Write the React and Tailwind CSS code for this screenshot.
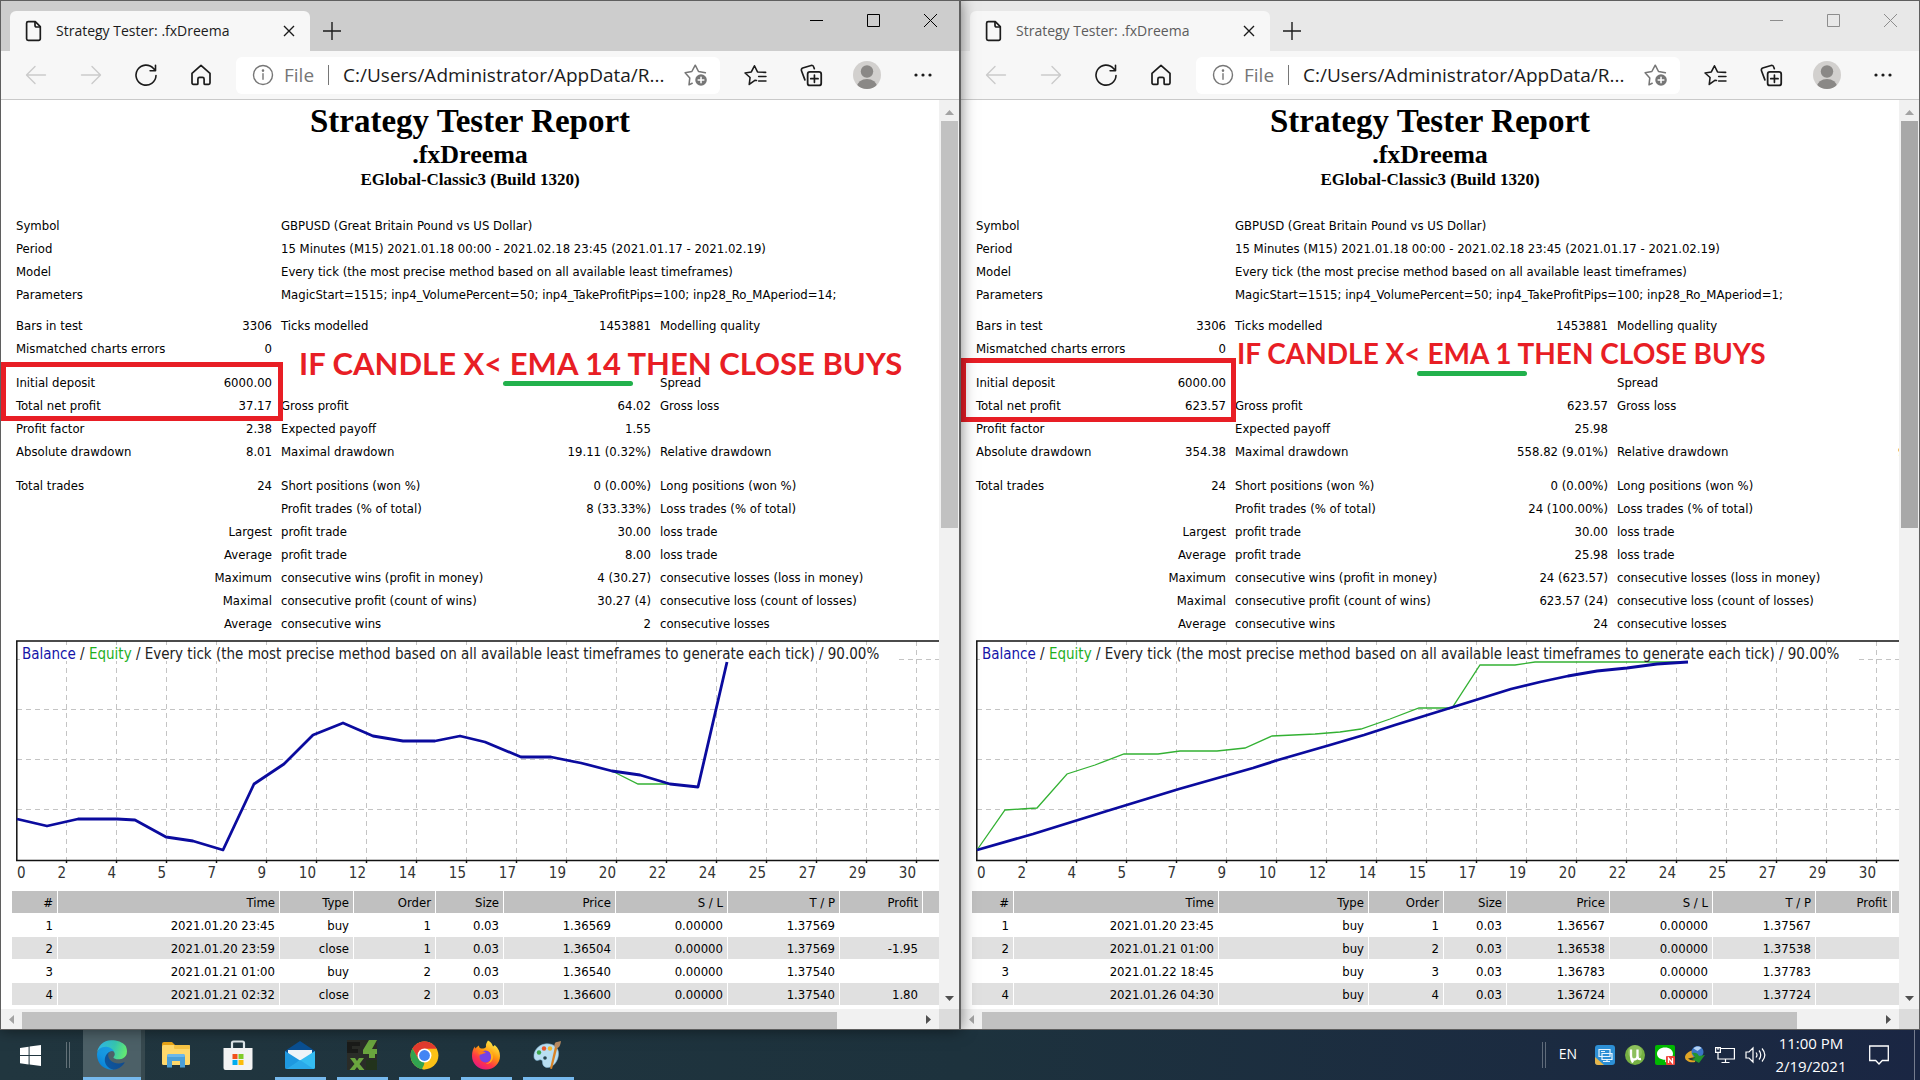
const SANS = "font-['Open_Sans','Noto_Sans',sans-serif]";
const TAHOMA = "font-['DejaVu_Sans_Condensed','DejaVu_Sans',sans-serif]";
const TIMES = "font-['Liberation_Serif',serif]";

const ticks = [0, 2, 4, 5, 7, 9, 10, 12, 14, 15, 17, 19, 20, 22, 24, 25, 27, 29, 30];

const reports = [
  {
    id: "ema14",
    active: true,
    period: "14",
    statCols: ["w-[160px]", "w-[105px]", "w-[220px]", "w-[159px]", "w-[280px]", "w-[95px]"],
    tradeCols: [
      "w-[46px]", "w-[222px]", "w-[74px]", "w-[82px]", "w-[68px]",
      "w-[112px]", "w-[112px]", "w-[112px]", "w-[83px]", "w-[109px]",
    ],
    stats: [
      ["Bars in test", "3306", "Ticks modelled", "1453881", "Modelling quality"],
      ["Mismatched charts errors", "0", "", "", ""],
      null,
      ["Initial deposit", "6000.00", "", "", "Spread"],
      ["Total net profit", "37.17", "Gross profit", "64.02", "Gross loss"],
      ["Profit factor", "2.38", "Expected payoff", "1.55", ""],
      ["Absolute drawdown", "8.01", "Maximal drawdown", "19.11 (0.32%)", "Relative drawdown"],
      null,
      ["Total trades", "24", "Short positions (won %)", "0 (0.00%)", "Long positions (won %)"],
      ["", "", "Profit trades (% of total)", "8 (33.33%)", "Loss trades (% of total)"],
      ["", "Largest", "profit trade", "30.00", "loss trade"],
      ["", "Average", "profit trade", "8.00", "loss trade"],
      ["", "Maximum", "consecutive wins (profit in money)", "4 (30.27)", "consecutive losses (loss in money)"],
      ["", "Maximal", "consecutive profit (count of wins)", "30.27 (4)", "consecutive loss (count of losses)"],
      ["", "Average", "consecutive wins", "2", "consecutive losses"],
    ],
    balance:
      "1,179 31,186 62,179 101,179 119,180 150,197 177,201 207,210 238,144 268,124 297,95 327,83 357,96 387,101 419,101 444,96 469,102 505,117 535,117 565,123 596,131 624,135 654,144 682,147 711,22",
    equity: "596,131 622,144 654,144",
    trades: [
      ["1", "2021.01.20 23:45", "buy", "1", "0.03", "1.36569", "0.00000", "1.37569", "", ""],
      ["2", "2021.01.20 23:59", "close", "1", "0.03", "1.36504", "0.00000", "1.37569", "-1.95", ""],
      ["3", "2021.01.21 01:00", "buy", "2", "0.03", "1.36540", "0.00000", "1.37540", "", ""],
      ["4", "2021.01.21 02:32", "close", "2", "0.03", "1.36600", "0.00000", "1.37540", "1.80", ""],
    ],
  },
  {
    id: "ema1",
    active: false,
    period: "1",
    statCols: ["w-[160px]", "w-[99px]", "w-[220px]", "w-[162px]", "w-[281px]", "w-[97px]"],
    tradeCols: [
      "w-[42px]", "w-[205px]", "w-[150px]", "w-[75px]", "w-[63px]",
      "w-[103px]", "w-[103px]", "w-[103px]", "w-[76px]", "w-[100px]",
    ],
    stats: [
      ["Bars in test", "3306", "Ticks modelled", "1453881", "Modelling quality"],
      ["Mismatched charts errors", "0", "", "", ""],
      null,
      ["Initial deposit", "6000.00", "", "", "Spread"],
      ["Total net profit", "623.57", "Gross profit", "623.57", "Gross loss"],
      ["Profit factor", "", "Expected payoff", "25.98", ""],
      ["Absolute drawdown", "354.38", "Maximal drawdown", "558.82 (9.01%)", "Relative drawdown", "9.01%"],
      null,
      ["Total trades", "24", "Short positions (won %)", "0 (0.00%)", "Long positions (won %)"],
      ["", "", "Profit trades (% of total)", "24 (100.00%)", "Loss trades (% of total)"],
      ["", "Largest", "profit trade", "30.00", "loss trade"],
      ["", "Average", "profit trade", "25.98", "loss trade"],
      ["", "Maximum", "consecutive wins (profit in money)", "24 (623.57)", "consecutive losses (loss in money)"],
      ["", "Maximal", "consecutive profit (count of wins)", "623.57 (24)", "consecutive loss (count of losses)"],
      ["", "Average", "consecutive wins", "24", "consecutive losses"],
    ],
    balance:
      "1,210 57,194 131,171 203,149 277,128 302,120 354,105 388,95 419,85 474,68 535,49 564,42 592,36 621,31 651,28 681,24 712,22",
    equity:
      "1,210 29,170 45,169 61,168 91,134 119,125 148,114 182,114 204,111 241,111 269,108 296,96 339,94 364,92 385,89 414,79 443,68 476,68 504,25 539,25 559,22 712,22",
    trades: [
      ["1", "2021.01.20 23:45", "buy", "1", "0.03", "1.36567", "0.00000", "1.37567", "", ""],
      ["2", "2021.01.21 01:00", "buy", "2", "0.03", "1.36538", "0.00000", "1.37538", "", ""],
      ["3", "2021.01.22 18:45", "buy", "3", "0.03", "1.36783", "0.00000", "1.37783", "", ""],
      ["4", "2021.01.26 04:30", "buy", "4", "0.03", "1.36724", "0.00000", "1.37724", "", ""],
    ],
  },
];

const tradeHead = ["#", "Time", "Type", "Order", "Size", "Price", "S / L", "T / P", "Profit", "Balance"];

/* ---------- browser icons ---------- */

function Icon({ children, size = 22, className = "" }) {
  return (
    <svg
      width={size}
      height={size}
      viewBox="0 0 22 22"
      fill="none"
      stroke="currentColor"
      strokeWidth="1.4"
      strokeLinecap="round"
      strokeLinejoin="round"
      className={className}
    >
      {children}
    </svg>
  );
}

const PageIcon = () => (
  <Icon className="text-[#1c1c1c]">
    <path d="M5.2 1.7h7.1l5 5v12.1a1.6 1.6 0 0 1-1.6 1.6H5.2a1.6 1.6 0 0 1-1.6-1.6V3.3a1.6 1.6 0 0 1 1.6-1.6z" strokeWidth="1.7" />
    <path d="M12 1.9v3.6a1.5 1.5 0 0 0 1.5 1.5H17" strokeWidth="1.7" />
  </Icon>
);
const BackIcon = () => (
  <Icon>
    <path d="M20.5 11H2M10 2.5 1.5 11l8.5 8.5" />
  </Icon>
);
const ForwardIcon = () => (
  <Icon>
    <path d="M1.5 11H20M12 2.5l8.5 8.5-8.5 8.5" />
  </Icon>
);
const ReloadIcon = () => (
  <Icon>
    <path d="M21 11.5A10 10 0 1 1 18.5 4.5L20.3 6.5M20.5 1.3v5.4h-5.4" strokeWidth="1.6" />
  </Icon>
);
const HomeIcon = () => (
  <Icon>
    <path
      d="M2 9.3 11 1.3l9 8v9.8a1.3 1.3 0 0 1-1.3 1.3h-3.6a1 1 0 0 1-1-1v-4.5a1.6 1.6 0 0 0-1.6-1.6H9.5a1.6 1.6 0 0 0-1.6 1.6v4.5a1 1 0 0 1-1 1H3.3A1.3 1.3 0 0 1 2 19.1z"
      strokeWidth="1.7"
    />
  </Icon>
);
const InfoIcon = () => (
  <Icon className="shrink-0 text-[#767676]">
    <circle cx="11" cy="11" r="9.5" />
    <path d="M11 9.7v5.5" />
    <circle cx="11" cy="6.6" r=".6" fill="currentColor" />
  </Icon>
);
const AddFavouriteIcon = () => (
  <Icon size={24} className="text-[#767676]">
    <path d="M7.5 18.6 4.6 20l.7-6.3L1 9l6.2-1.2L10.3 2l3 5.8 6.3 1.2" />
    <circle cx="15.6" cy="15.6" r="5.3" fill="currentColor" stroke="none" />
    <path d="M15.6 13v5.2M13 15.6h5.2" stroke="#fff" />
  </Icon>
);
const FavouritesIcon = () => (
  <Icon size={23}>
    <path d="m12 15.8-1.6-.2-5.4 4 .8-6.7L1 8.6l6-1L10 1.7l2.9 5.9 7.8.4M14 12h7M14 16.3h7" strokeWidth="1.5" />
  </Icon>
);
const CollectionsIcon = () => (
  <Icon size={23}>
    <rect x="7.3" y="7.5" width="13" height="13" rx="2.2" strokeWidth="1.7" />
    <path d="M13.8 10.5v7M10.3 14h7" strokeWidth="1.6" />
    <path d="M4.7 15.2 1.4 6.4a2 2 0 0 1 1.2-2.6l8-2.4a2 2 0 0 1 2.5 1.4l.6 1.7" strokeWidth="1.6" />
  </Icon>
);
const AvatarIcon = ({ id }) => (
  <svg width="28" height="28" viewBox="0 0 28 28">
    <clipPath id={`${id}-avatar`}>
      <circle cx="14" cy="14" r="14" />
    </clipPath>
    <g clipPath={`url(#${id}-avatar)`}>
      <rect width="28" height="28" fill="#d2d0ce" />
      <circle cx="14" cy="10.5" r="6.2" fill="#8a8886" />
      <ellipse cx="14" cy="26" rx="10" ry="8" fill="#8a8886" />
    </g>
  </svg>
);
const MoreIcon = () => (
  <svg width="18" height="4" viewBox="0 0 18 4" fill="currentColor">
    <circle cx="2" cy="2" r="1.6" />
    <circle cx="9" cy="2" r="1.6" />
    <circle cx="16" cy="2" r="1.6" />
  </svg>
);

/* ---------- browser window ---------- */

function TitleBar({ active }) {
  const button = "flex h-[38px] w-[57px] items-center justify-center";
  return (
    <div className={`flex h-[50px] shrink-0 justify-between ${active ? "bg-[#cdcdcd]" : "bg-[#e8e8e8]"}`}>
      <div className="flex items-end pl-[9px]">
        <div
          className={`flex h-10 w-[300px] items-center rounded-t-md bg-[#f7f7f7] pr-[11px] pb-px pl-[13px] ${
            active ? "text-[#1b1b1b]" : "text-[#5c5c5c]"
          }`}
        >
          <PageIcon />
          <span className={`ml-[11px] flex-1 pb-px text-[14px] whitespace-nowrap ${SANS}`}>
            Strategy Tester: .fxDreema
          </span>
          <button aria-label="Close tab" className="flex size-5 items-center justify-center">
            <svg width="12" height="12" viewBox="0 0 12 12" stroke="#1b1b1b" strokeWidth="1.4">
              <path d="m1 1 10 10M11 1 1 11" />
            </svg>
          </button>
        </div>
        <button aria-label="New tab" className="flex h-10 w-[44px] items-center justify-center">
          <svg width="18" height="18" viewBox="0 0 18 18" stroke="#1b1b1b" strokeWidth="1.4">
            <path d="M9 0v18M0 9h18" />
          </svg>
        </button>
      </div>
      <div className={`flex ${active ? "text-black" : "text-[#8d8d8d]"}`}>
        <button aria-label="Minimize" className={button}>
          <svg width="13" height="13" viewBox="0 0 13 13" stroke="currentColor" fill="none">
            <path d="M0 6.5h13" />
          </svg>
        </button>
        <button aria-label="Maximize" className={button}>
          <svg width="13" height="13" viewBox="0 0 13 13" stroke="currentColor" fill="none">
            <path d="M.5.5h12v12H.5z" />
          </svg>
        </button>
        <button aria-label="Close" className={button}>
          <svg width="13" height="13" viewBox="0 0 13 13" stroke="currentColor" fill="none">
            <path d="m0 0 13 13M13 0 0 13" />
          </svg>
        </button>
      </div>
    </div>
  );
}

function Toolbar({ id }) {
  const left = "flex h-10 w-[55px] items-center justify-center";
  const right = "flex h-10 w-14 items-center justify-center";
  return (
    <div className="flex h-[49px] shrink-0 items-center border-b border-[#c9c9c9] bg-[#f7f7f7] pr-2 pl-[7px] text-[#1b1b1b]">
      <button aria-label="Back" className={`${left} text-[#cbcbcb]`}>
        <BackIcon />
      </button>
      <button aria-label="Forward" className={`${left} text-[#cbcbcb]`}>
        <ForwardIcon />
      </button>
      <button aria-label="Refresh" className={left}>
        <ReloadIcon />
      </button>
      <button aria-label="Home" className={left}>
        <HomeIcon />
      </button>
      <div className={`mr-[7px] ml-2 flex h-[37px] flex-1 items-center rounded-md bg-white pr-3 pl-4 text-[19px] ${SANS}`}>
        <InfoIcon />
        <label htmlFor={`${id}-url`} className="ml-[10px] text-[#767676]">
          File
        </label>
        <span className="mx-[14px] h-5 w-px bg-[#767676]" />
        <input
          id={`${id}-url`}
          type="text"
          readOnly
          value="C:/Users/Administrator/AppData/R..."
          className="min-w-0 flex-1 bg-transparent text-[#1b1b1b] outline-none"
        />
        <button aria-label="Add to favourites" className="ml-1">
          <AddFavouriteIcon />
        </button>
      </div>
      <button aria-label="Favourites" className={right}>
        <FavouritesIcon />
      </button>
      <button aria-label="Collections" className={right}>
        <CollectionsIcon />
      </button>
      <button aria-label="Profile" className={right}>
        <AvatarIcon id={id} />
      </button>
      <button aria-label="Settings and more" className={right}>
        <MoreIcon />
      </button>
    </div>
  );
}

function StatsTable({ report }) {
  const meta = [
    ["Symbol", "GBPUSD (Great Britain Pound vs US Dollar)"],
    ["Period", "15 Minutes (M15) 2021.01.18 00:00 - 2021.02.18 23:45 (2021.01.17 - 2021.02.19)"],
    ["Model", "Every tick (the most precise method based on all available least timeframes)"],
    [
      "Parameters",
      `MagicStart=1515; inp4_VolumePercent=50; inp4_TakeProfitPips=100; inp28_Ro_MAperiod=${report.period};`,
    ],
  ];
  return (
    <table className="mt-6 ml-[10px] w-[1019px] table-fixed border-collapse leading-[23px] whitespace-nowrap">
      <colgroup>
        {report.statCols.map((w, i) => (
          <col key={i} className={w} />
        ))}
      </colgroup>
      <tbody>
        {meta.map(([label, value]) => (
          <tr key={label} className="h-[23px]">
            <td colSpan={2} className="pl-[5px]">{label}</td>
            <td colSpan={4} className="pl-[5px]">{value}</td>
          </tr>
        ))}
        <tr className="h-2">
          <td colSpan={6} />
        </tr>
        {report.stats.map((row, i) =>
          row ? (
            <tr key={i} className="h-[23px]">
              {row.map((cell, j) => (
                <td key={j} className={j === 1 || j === 3 ? "pr-1 text-right" : "pl-[5px]"}>
                  {cell}
                </td>
              ))}
            </tr>
          ) : (
            <tr key={i} className="h-[11px]">
              <td colSpan={6} />
            </tr>
          )
        )}
      </tbody>
    </table>
  );
}

function Chart({ balance, equity }) {
  return (
    <svg width="1018" height="250" viewBox="0 0 1018 250" className={`mt-[5px] ml-[15px] block text-[15px] ${TAHOMA}`}>
      <g stroke="#c4c4c4" strokeWidth="1" strokeDasharray="5 4">
        {ticks.slice(1).map((t, i) => (
          <path key={t} d={`M${50 * (i + 1) + 0.5} 1V220`} />
        ))}
        {[19.5, 69.5, 119.5, 169.5].map((y) => (
          <path key={y} d={`M1 ${y}H1018`} />
        ))}
      </g>
      <g stroke="#111" strokeWidth="1.5" fill="none">
        <path d="M.8 1H1018M.8 .3V221M0 220.5H1018" />
        {ticks.slice(1).map((t, i) => (
          <path key={t} d={`M${50 * (i + 1) + 0.5} 220v3`} />
        ))}
      </g>
      <rect x="4" y="5" width="875" height="16" fill="#fff" />
      <polyline points={equity} fill="none" stroke="#33b133" strokeWidth="1.3" />
      <polyline points={balance} fill="none" stroke="#0b0b9e" strokeWidth="2.8" strokeLinejoin="round" />
      <text x="6" y="19" fill="#222">
        <tspan fill="#1414a8">Balance</tspan>
        {" / "}
        <tspan fill="#1fb01f">Equity</tspan>
        {" / Every tick (the most precise method based on all available least timeframes to generate each tick) / 90.00%"}
      </text>
      <g fill="#333">
        <text x="1" y="238">0</text>
        {ticks.slice(1).map((t, i) => (
          <text key={t} x={50 * (i + 1)} y="238" textAnchor="end">
            {t}
          </text>
        ))}
      </g>
    </svg>
  );
}

function TradesTable({ report }) {
  return (
    <table className="mt-px ml-[10px] w-[1020px] table-fixed border-separate border-spacing-0 text-right leading-5 whitespace-nowrap">
      <colgroup>
        {report.tradeCols.map((w, i) => (
          <col key={i} className={w} />
        ))}
      </colgroup>
      <thead>
        <tr className="bg-[#c0c0c0]">
          {tradeHead.map((h) => (
            <th key={h} className="border-b border-l border-white pt-[2px] pr-1 font-normal">
              {h}
            </th>
          ))}
        </tr>
      </thead>
      <tbody>
        {report.trades.map((row) => (
          <tr key={row[0]} className="even:bg-[#e0e0e0]">
            {row.map((cell, j) => (
              <td key={j} className={`border-b border-white pt-[2px] pr-1 ${j > 8 ? "" : "border-l"}`}>
                {cell}
              </td>
            ))}
          </tr>
        ))}
      </tbody>
    </table>
  );
}

const Arrow = ({ d, fill }) => (
  <svg width="9" height="9" viewBox="0 0 9 9" fill={fill}>
    <path d={d} />
  </svg>
);

function BrowserWindow({ report, children }) {
  const { active } = report;
  return (
    <section
      className={`relative flex min-w-0 flex-col border border-[#5f5f5f] bg-white ${
        active ? "z-10 -mr-px border-r-2 shadow-[0_0_14px_rgba(0,0,0,0.5)]" : "border-l-0 pl-px"
      }`}
    >
      <TitleBar active={active} />
      <Toolbar id={report.id} />
      <div className="grid min-h-0 flex-1 grid-cols-[minmax(0,1fr)_20px] grid-rows-[minmax(0,1fr)_20px] bg-[#f1f1f1]">
        <main className={`overflow-hidden bg-white text-[13px] text-black ${TAHOMA}`}>
          <header className={`pt-[2px] text-center font-bold ${TIMES}`}>
            <h1 className="text-[33px] leading-[39px]">Strategy Tester Report</h1>
            <p className="text-[26px] leading-7">.fxDreema</p>
            <p className="text-[17px] leading-[21px]">EGlobal-Classic3 (Build 1320)</p>
          </header>
          <StatsTable report={report} />
          <Chart balance={report.balance} equity={report.equity} />
          <TradesTable report={report} />
        </main>
        <div className="flex flex-col items-center">
          <div className="flex h-[21px] items-center pt-1">
            <Arrow d="M0 7 4.5 2 9 7z" fill="#a3a3a3" />
          </div>
          <div className="w-full flex-1 px-[2px] pr-px">
            <div className={`h-[47%] ${active ? "bg-[#c1c1c1]" : "bg-[#a8a8a8]"}`} />
          </div>
          <div className="flex h-[21px] items-center">
            <Arrow d="M0 2 4.5 7 9 2z" fill="#505050" />
          </div>
        </div>
        <div className="flex items-center">
          <div className="flex w-[21px] justify-center">
            <Arrow d="M7 0 2 4.5 7 9z" fill="#a3a3a3" />
          </div>
          <div className="flex-1 pt-[2px]">
            <div className="h-[17px] w-[91%] bg-[#c1c1c1]" />
          </div>
          <div className="flex w-[21px] justify-center">
            <Arrow d="M2 0 7 4.5 2 9z" fill="#505050" />
          </div>
        </div>
        <div className="bg-[#dcdcdc]" />
      </div>
      {children}
    </section>
  );
}

/* ---------- taskbar ---------- */

const EdgeLogo = () => (
  <svg width="30" height="30" viewBox="0 0 256 256">
    <defs>
      <linearGradient id="edge-a" x1="0" y1="1" x2="1" y2="0.5">
        <stop offset="0" stopColor="#0c59a4" />
        <stop offset="1" stopColor="#114a8b" />
      </linearGradient>
      <linearGradient id="edge-b" x1="0.8" y1="0.2" x2="0.3" y2="1">
        <stop offset="0" stopColor="#1b9de2" />
        <stop offset="0.5" stopColor="#1595df" />
        <stop offset="1" stopColor="#0680d7" />
      </linearGradient>
      <linearGradient id="edge-c" x1="0" y1="0.4" x2="1" y2="0.6">
        <stop offset="0" stopColor="#2fb7e8" />
        <stop offset="0.55" stopColor="#37c6b0" />
        <stop offset="1" stopColor="#66eb6e" />
      </linearGradient>
    </defs>
    <path fill="url(#edge-a)" d="M231 190a94 94 0 0 1-11 5 102 102 0 0 1-36 6c-48 0-89-33-89-75a32 32 0 0 1 17-28c-43 2-54 47-54 73 0 74 68 82 83 82 8 0 20-2 27-5h1a128 128 0 0 0 67-53 4 4 0 0 0-5-5z" />
    <path fill="url(#edge-b)" d="M106 241a79 79 0 0 1-23-21 81 81 0 0 1 29-122c3-1 9-4 16-4a34 34 0 0 1 27 14 33 33 0 0 1 6 19c0-1 25-81-81-81-44 0-80 42-80 79a130 130 0 0 0 12 56 128 128 0 0 0 156 67 75 75 0 0 1-62-7z" />
    <path fill="url(#edge-c)" d="M152 149c-1 1-3 2-3 6 0 3 2 6 5 8 17 12 48 10 48 10a69 69 0 0 0 35-9 72 72 0 0 0 35-62c1-26-9-43-13-51C233 16 182 0 128 0A128 128 0 0 0 0 126c1-37 37-66 80-66 4 0 24 0 42 10 17 9 25 19 31 30 6 10 8 24 8 29 0 5-3 13-9 20z" transform="scale(.94) translate(0 2)" />
  </svg>
);

const ExplorerLogo = () => (
  <svg width="28" height="26" viewBox="0 0 28 26">
    <path d="M0 2a2 2 0 0 1 2-2h8l3 3v5H0z" fill="#e8a416" />
    <rect y="3" width="28" height="20" rx="1.5" fill="#ffd86b" />
    <rect y="3" x="12" width="16" height="4" rx="1" fill="#f6c344" />
    <path d="M5 25.5V15a3 3 0 0 1 3-3h12a3 3 0 0 1 3 3v10.5h-5V19h-8v6.5z" fill="#4b9fd8" />
    <rect x="5" y="12" width="18" height="3" rx="1.5" fill="#6db8ea" />
  </svg>
);

const StoreLogo = () => (
  <svg width="30" height="30" viewBox="0 0 30 30">
    <path d="M9 9V3a1.5 1.5 0 0 1 1.5-1.5h9A1.5 1.5 0 0 1 21 3v6" fill="none" stroke="#dfe7ea" strokeWidth="2.2" />
    <path d="M.5 8h29v20a2 2 0 0 1-2 2h-25a2 2 0 0 1-2-2z" fill="#f3f3f3" />
    <path d="M9.5 14h5v5h-5z" fill="#f1511b" />
    <path d="M15.5 14h5v5h-5z" fill="#80cc28" />
    <path d="M9.5 20h5v5h-5z" fill="#00adef" />
    <path d="M15.5 20h5v5h-5z" fill="#fbbc09" />
  </svg>
);

const MailLogo = () => (
  <svg width="30" height="28" viewBox="0 0 30 28">
    <path d="M0 10 15 0l15 10v4H0z" fill="#0a4f91" />
    <path d="M3 9h24v8l-12 6L3 17z" fill="#eef4f8" />
    <path d="M30 10v16.5a1.5 1.5 0 0 1-1.5 1.5h-27z" fill="#35bdf2" />
    <path d="M0 10v16.5A1.5 1.5 0 0 0 1.5 28h.8L15 19.5z" fill="#1e98e0" />
    <path d="M1.5 28 15 19l13.5 9z" fill="#2aa9ea" />
  </svg>
);

const TerminalLogo = () => (
  <svg width="30" height="30" viewBox="0 0 30 30">
    <rect width="30" height="30" fill="#2a2c28" />
    <path d="M0 2h13v4H5v3h6v4H0z" fill="#1a1b19" />
    <path d="M22 0h8l-5 9h5v5h-2v4h-6v-4h-6v-4z" fill="#6aa53e" />
    <path d="M3 18h5l2 3 2-3h5l-4.5 6 5 6h-5.2l-2.3-3-2.3 3H2.500l5-6z" fill="#6aa53e" />
    <path d="M19 20h11v10H19z" fill="#22331c" />
  </svg>
);

const ChromeLogo = () => (
  <svg width="29" height="29" viewBox="0 0 48 48">
    <circle cx="24" cy="24" r="23" fill="#fbc116" />
    <path d="M24 24 4.1 12.5A23 23 0 0 1 43.9 12.5L24 12.5z" fill="#ea4335" />
    <path d="M4.1 12.5A23 23 0 0 1 43.9 12.5H24L14 30z" fill="#e33b2e" />
    <path d="M4.1 12.5 14 29.8l10 5.2-1.5 12A23 23 0 0 1 4.1 12.5z" fill="#31a350" />
    <path d="m34 29.5-10.5 17.5L20 46l6-12z" fill="#fbc116" />
    <circle cx="24" cy="24" r="11.5" fill="#fff" />
    <circle cx="24" cy="24" r="9" fill="#4285f4" />
  </svg>
);

const FirefoxLogo = () => (
  <svg width="30" height="30" viewBox="0 0 30 30">
    <defs>
      <linearGradient id="fox" x1="0.8" y1="0.05" x2="0.25" y2="1">
        <stop offset="0" stopColor="#fff44f" />
        <stop offset="0.4" stopColor="#ff980e" />
        <stop offset="0.7" stopColor="#ff3647" />
        <stop offset="1" stopColor="#e31587" />
      </linearGradient>
    </defs>
    <path
      d="M17 .5c3 1.5 4.5 4 5 6 1-.5 1.5-1 1.7-1.5C27.5 8 29 12 29 16c0 7.5-6 13.5-14 13.5S1 23.5 1 16c0-4 1-7.5 3-9.5 0 1 .2 1.5.5 2C5.5 7 7 6 8 5.5 8 7 8.5 8 10 8.5c2 .2 4 0 5-1.5-.5-3 1-5 2-6.5z"
      fill="url(#fox)"
    />
    <circle cx="14.5" cy="16.5" r="6" fill="#7542e5" />
    <path d="M7 12c3-2 6-1 8 1-2 0-3 1-5 1.5-2 .4-3-.8-3-2.5z" fill="#ff7a1a" />
    <path d="M15 9c4 0 7 3 7 7.5S19 24 14.5 24c3.5-1 5.5-3 5.5-7 0-3-1-6-5-8z" fill="#ffb21c" />
  </svg>
);

const PaintLogo = () => (
  <svg width="30" height="30" viewBox="0 0 30 30">
    <path d="M12 4C5 5 .5 11 1 17c.3 3 2.5 4 5 3 2-.8 3.5 0 3.5 2 0 3 1.5 5.5 5 5.5 6 0 11-7 11-14S19 3 12 4z" fill="#b9dff2" stroke="#86b9d6" strokeWidth=".6" />
    <circle cx="6" cy="12.5" r="2.2" fill="#3aa64a" />
    <circle cx="11" cy="8.5" r="2.2" fill="#e8582c" />
    <circle cx="17" cy="8.5" r="2.2" fill="#f2b92d" />
    <circle cx="12" cy="18" r="1.8" fill="#26444f" />
    <path d="M24.5 7 19 29l-2-.5L22 6.5z" fill="#d98326" />
    <path d="M21.5 7C21 4 22 2 24 2l4-1c-.5 3-1 6-3.5 7z" fill="#b98c63" />
  </svg>
);

const apps = [
  { name: "Microsoft Edge", Logo: EdgeLogo, state: "current" },
  { name: "File Explorer", Logo: ExplorerLogo },
  { name: "Microsoft Store", Logo: StoreLogo },
  { name: "Mail", Logo: MailLogo, state: "open" },
  { name: "MetaTrader 4", Logo: TerminalLogo, state: "open" },
  { name: "Google Chrome", Logo: ChromeLogo, state: "open" },
  { name: "Firefox", Logo: FirefoxLogo, state: "open" },
  { name: "Paint", Logo: PaintLogo, state: "open" },
];

function Tray() {
  const slot = "flex h-full w-[30px] items-center justify-center";
  return (
    <div className="flex h-full items-center">
      <div className="h-[26px] w-1 border-x border-white/30" />
      <button className="w-[44px] pb-1 text-center text-[14px]">EN</button>
      <button aria-label="Keyboard utility" className={slot}>
        <svg width="20" height="20" viewBox="0 0 20 20">
          <rect width="20" height="20" rx="3" fill="#2d8fd5" />
          <path d="M0 12v5a3 3 0 0 0 3 3h6z" fill="#e6b54a" />
          <path d="M4 4.5h11v7H4zM7 8.5h10v6H7z" fill="#2d8fd5" stroke="#e8f5ff" strokeWidth="1.2" />
          <path d="M8 16.5h7M12 14.5v2M6 6.5h4" stroke="#e8f5ff" strokeWidth="1.2" />
        </svg>
      </button>
      <button aria-label="Torrent client" className={slot}>
        <svg width="20" height="20" viewBox="0 0 20 20">
          <circle cx="10" cy="10" r="10" fill="#76b043" />
          <circle cx="10" cy="7" r="7" fill="#a3cf78" opacity=".5" />
          <path d="M6 4.5v6c0 2.5 1 4 3 4 2.2 0 3.5-1.8 3.5-4V4.5M12.5 10c0 3.5 1 4.5 3.5 4M6 11c0 3 .6 4.5 2 6.5" fill="none" stroke="#fff" strokeWidth="2.3" />
        </svg>
      </button>
      <button aria-label="Messenger" className={slot}>
        <svg width="20" height="20" viewBox="0 0 20 20">
          <rect width="20" height="20" rx="2" fill="#00b900" />
          <path d="M10 2.5c4.5 0 8 2.7 8 6.2 0 3.8-4 6.3-8 8.8l.3-2.8C5.5 14.7 2 12.5 2 8.7c0-3.5 3.5-6.2 8-6.2z" fill="#fff" />
          <rect x="11" y="11" width="9" height="9" rx="1" fill="#ef4036" />
          <path d="M13.5 18v-5l4 5v-5" fill="none" stroke="#fff" strokeWidth="1.3" />
        </svg>
      </button>
      <button aria-label="Download manager" className={slot}>
        <svg width="20" height="18" viewBox="0 0 20 18">
          <path d="M9 4C4 5 0 8 0 11c0 4 5 6 10 5l1-4z" fill="#e0a526" />
          <path d="M3 12.5c2 2 5 2.5 8 1.5l-1-3z" fill="#333a2a" />
          <circle cx="12.5" cy="6" r="6" fill="#3c76c6" />
          <path d="M8.5 2.5c2-2.5 6-2.5 8-.5l-4 3z" fill="#b5d2f2" />
          <path d="M7 7c3-1 6 0 7 3l6-1-6 8-7-4 3-1C9.5 10 8.5 8.5 7 7z" fill="#23952c" />
        </svg>
      </button>
      <button aria-label="Network" className={slot}>
        <svg width="20" height="18" viewBox="0 0 20 18" fill="none" stroke="#fff" strokeWidth="1.2">
          <path d="M6 2.5h13.4V13H3V8M10.5 13v3.5M6.5 16.5h8" />
          <path d="M.6 1.6h4.8v4.8H.6zM3 6.4V8M2 3h2" />
        </svg>
      </button>
      <button aria-label="Volume" className={slot}>
        <svg width="21" height="18" viewBox="0 0 21 18" fill="none" stroke="#fff" strokeWidth="1.2">
          <path d="M1 6h3l4-4v14l-4-4H1zM11 6.5c1.2 1.5 1.2 3.5 0 5M14 4.5c2.3 2.5 2.3 6.5 0 9M17 2.5c3.5 4 3.5 9 0 13" />
        </svg>
      </button>
      <button className="w-[82px] text-center text-[15px] leading-[23px] whitespace-nowrap">
        11:00 PM
        <br />
        2/19/2021
      </button>
      <button aria-label="Notifications" className="mr-2 flex w-[54px] justify-center">
        <svg width="20" height="20" viewBox="0 0 20 20" fill="none" stroke="#fff" strokeWidth="1.3">
          <path d="M.7 1h18.600v14.500h-6L10 19l-3.300-3.500h-6z" />
        </svg>
      </button>
      <button aria-label="Show desktop" className="h-full w-[6px] border-l border-white/40" />
    </div>
  );
}

function Taskbar() {
  return (
    <footer
      className={`flex h-[50px] shrink-0 justify-between bg-linear-to-r from-[#21363f] via-[#1d323d] to-[#1a2643] text-white ${SANS}`}
    >
      <nav className="flex">
        <button aria-label="Start" className="flex w-[60px] items-center justify-center">
          <svg width="21" height="21" viewBox="0 0 21 21" fill="#fff">
            <path d="M0 3 8.600 1.800v8.300H0zM9.600 1.600 21 0v10.100H9.600zM0 11.100h8.600v8.300L0 18.200zM9.600 11.100H21V21L9.600 19.500z" />
          </svg>
        </button>
        <div className="mr-[13px] ml-[6px] h-[26px] w-1 self-center border-x border-white/30" />
        {apps.map(({ name, Logo, state }) => (
          <button
            key={name}
            aria-label={name}
            className={`flex w-[62px] items-center justify-center ${
              state === "current" ? "border-r-4 border-[#37494f] bg-[#4c6067]" : ""
            }`}
          >
            <span
              className={`flex h-full items-center justify-center border-b-[3px] pt-[3px] ${
                state === "current"
                  ? "w-full border-[#76b9ed]"
                  : state === "open"
                    ? "w-[51px] border-[#76b9ed]"
                    : "w-[51px] border-transparent"
              }`}
            >
              <Logo />
            </span>
          </button>
        ))}
      </nav>
      <Tray />
    </footer>
  );
}

/* ---------- screen ---------- */

export default function App() {
  return (
    <div className="flex h-screen flex-col overflow-hidden">
      <div className="grid min-h-0 flex-1 grid-cols-2">
        <BrowserWindow report={reports[0]}>
          {/* markup drawn over the report */}
          <div className="absolute top-[361px] left-0 h-[59px] w-[282px] border-[5px] border-[#e81e25]" />
          <p className="absolute top-[342px] left-[298px] font-['Lato',sans-serif] text-[31px] leading-10 font-bold whitespace-nowrap text-[#e81e25]">
            IF CANDLE X&lt; EMA 14 THEN CLOSE BUYS
          </p>
          <div className="absolute top-[380px] left-[502px] h-[5px] w-[130px] rounded-full bg-[#22b14c]" />
        </BrowserWindow>
        <BrowserWindow report={reports[1]}>
          <div className="absolute top-[357px] left-px h-[64px] w-[275px] border-[5px] border-[#e81e25]" />
          <p className="absolute top-[332px] left-[277px] font-['Lato',sans-serif] text-[28px] leading-10 font-bold whitespace-nowrap text-[#e81e25]">
            IF CANDLE X&lt; EMA 1 THEN CLOSE BUYS
          </p>
          <div className="absolute top-[370px] left-[457px] h-[5px] w-[110px] rounded-full bg-[#22b14c]" />
        </BrowserWindow>
      </div>
      <Taskbar />
    </div>
  );
}
